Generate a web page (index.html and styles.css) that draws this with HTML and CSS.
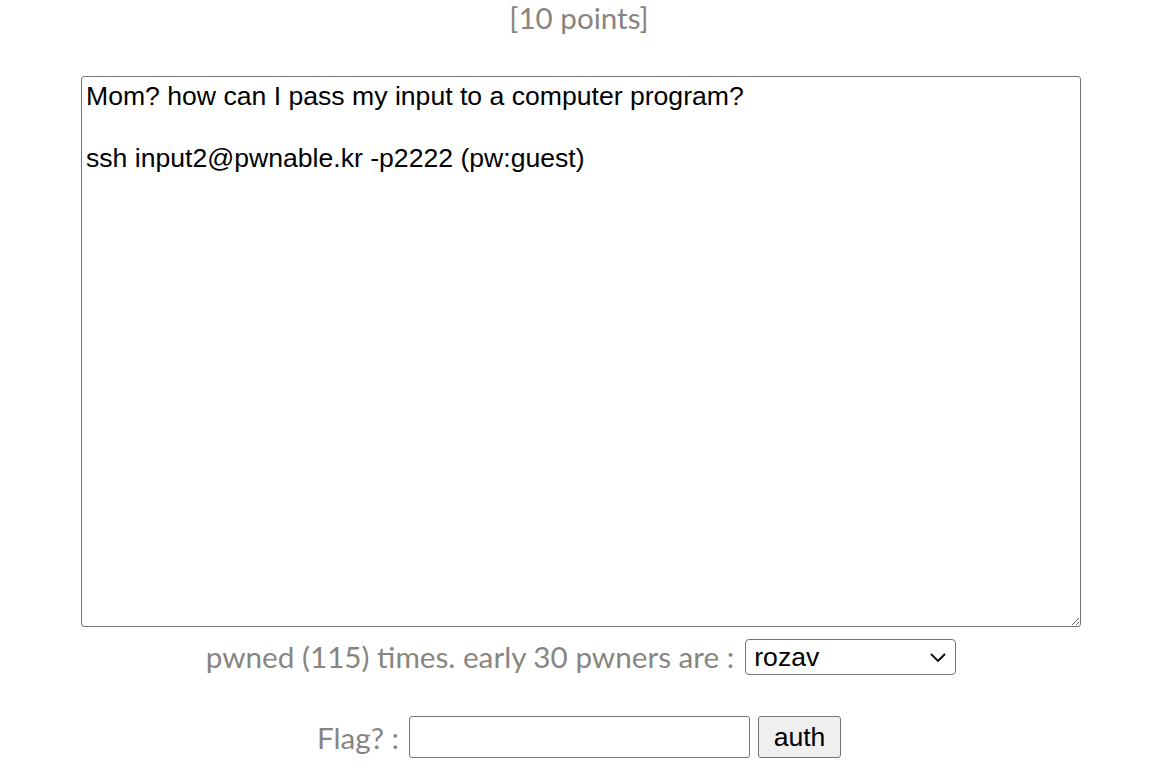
FILE: index.html
```html
<!DOCTYPE html>
<html>
<head>
<meta charset="utf-8">
<link rel="stylesheet" href="styles.css">
</head>
<body>
<div class="page">
  <div class="points">[10 points]</div>
  <textarea class="desc" readonly>Mom? how can I pass my input to a computer program?

ssh input2@pwnable.kr -p2222 (pw:guest)</textarea>
  <div class="pwned">pwned (115) times. early 30 pwners are :
    <select class="pwners">
      <option>rozav</option>
    </select>
  </div>
  <form class="flag">
    <span class="flag-label">Flag? :</span>
    <input class="flag-input" type="text">
    <button class="auth" type="button">auth</button>
  </form>
</div>
</body>
</html>
```
FILE: styles.css
```css
html, body {
  margin: 0;
  padding: 0;
  background: #ffffff;
}
.page {
  display: flex;
  flex-direction: column;
  align-items: center;
  font-family: "Lato", "Liberation Sans", sans-serif;
  color: #888580;
}
.points {
  font-size: 29.6px;
  line-height: 36px;
  margin-top: 0;
}
.desc {
  box-sizing: border-box;
  width: 1000px;
  height: 551px;
  margin-top: 40px;
  margin-left: 4px;
  padding: 4px 4px 2px;
  border: 1px solid #767676;
  border-radius: 3px;
  font-family: "Liberation Sans", Arial, sans-serif;
  font-size: 26.6px;
  line-height: 31px;
  color: #000;
  resize: both;
  outline: none;
}
.pwned {
  display: flex;
  align-items: center;
  gap: 11px;
  margin-top: 11px;
  margin-left: 4px;
  font-size: 29.7px;
  height: 37px;
}
.pwners {
  box-sizing: border-box;
  width: 211px;
  height: 36px;
  border: 1px solid #767676;
  border-radius: 4px;
  font-family: "Liberation Sans", Arial, sans-serif;
  font-size: 26.6px;
  color: #000;
  background: #fff url("data:image/svg+xml;utf8,<svg xmlns='http://www.w3.org/2000/svg' width='18' height='12' viewBox='0 0 18 12'><path d='M2 3 L9 10 L16 3' fill='none' stroke='black' stroke-width='1.8'/></svg>") no-repeat right 8px center;
  -webkit-appearance: none;
  appearance: none;
  padding: 0 0 0 8px;
}
.flag {
  display: flex;
  align-items: center;
  margin: 41px 0 0 0;
  font-size: 29.7px;
}
.flag-label {
  margin-right: 10px;
}
.flag-input {
  box-sizing: border-box;
  width: 341px;
  height: 42px;
  border: 1px solid #767676;
  border-radius: 3px;
  font-size: 24px;
  margin: 0 8px 0 0;
}
.auth {
  box-sizing: border-box;
  width: 83px;
  height: 42px;
  border: 1px solid #767676;
  border-radius: 3px;
  background: #efefef;
  font-family: "Liberation Sans", Arial, sans-serif;
  font-size: 26.6px;
  color: #000;
  padding: 0;
}
```
